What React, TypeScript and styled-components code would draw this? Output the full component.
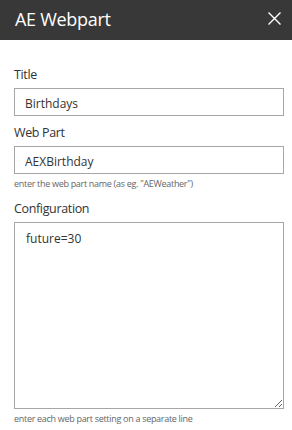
import React from 'react';
import styled, { createGlobalStyle } from 'styled-components';

const GlobalStyle = createGlobalStyle`
  html, body {
    margin: 0;
    padding: 0;
    background: #ffffff;
  }
  body {
    font-family: "Open Sans", "Noto Sans", sans-serif;
    color: #333333;
  }
`;

interface FieldProps {
  label: string;
  help?: string;
  children: React.ReactNode;
}

const Field: React.FC<FieldProps> = ({ label, help, children }) => (
  <FieldBlock>
    <Label>{label}</Label>
    {children}
    {help && <Help>{help}</Help>}
  </FieldBlock>
);

const App: React.FC = () => {
  return (
    <>
      <GlobalStyle />
      <Panel>
        <Header>
          <HeaderTitle>AE Webpart</HeaderTitle>
          <CloseButton aria-label="Close">
            <svg width="13" height="13" viewBox="0 0 13 13">
              <path d="M0.5 0.5 L12.5 12.5 M12.5 0.5 L0.5 12.5" stroke="#ffffff" strokeWidth="1.4" fill="none" />
            </svg>
          </CloseButton>
        </Header>
        <Body>
          <Field label="Title">
            <TextInput defaultValue="Birthdays" />
          </Field>
          <Field label="Web Part" help={'enter the web part name (as eg. "AEWeather")'}>
            <TextInput defaultValue="AEXBirthday" />
          </Field>
          <Field label="Configuration" help="enter each web part setting on a separate line">
            <TextArea defaultValue="future=30" />
          </Field>
        </Body>
      </Panel>
    </>
  );
};

const Panel = styled.div`
  width: 292px;
  height: 430px;
  display: flex;
  flex-direction: column;
  background: #ffffff;
`;

const Header = styled.div`
  height: 40px;
  background: #383838;
  display: flex;
  align-items: center;
  justify-content: space-between;
  padding: 0 11px 3px 15px;
  box-sizing: border-box;
`;

const HeaderTitle = styled.div`
  color: #ffffff;
  font-size: 18px;
  font-weight: 400;
  letter-spacing: -0.3px;
  line-height: 22px;
`;

const CloseButton = styled.button`
  background: none;
  border: none;
  padding: 0;
  width: 13px;
  height: 13px;
  display: flex;
  cursor: pointer;
`;

const Body = styled.div`
  padding: 25px 8px 0 14px;
  display: flex;
  flex-direction: column;
  gap: 7px;
`;

const FieldBlock = styled.div`
  display: flex;
  flex-direction: column;
`;

const Label = styled.label`
  font-size: 12.5px;
  letter-spacing: -0.35px;
  color: #333333;
  line-height: 20px;
  margin-bottom: 3px;
`;

const TextInput = styled.input`
  width: 270px;
  height: 28px;
  box-sizing: border-box;
  border: 1px solid #a6a6a6;
  border-radius: 0;
  padding: 2px 10px 0;
  font-family: "Open Sans", "Noto Sans", sans-serif;
  font-size: 12px;
  color: #333333;
  outline: none;
`;

const TextArea = styled.textarea`
  width: 270px;
  height: 187px;
  box-sizing: border-box;
  border: 1px solid #a6a6a6;
  border-radius: 0;
  padding: 6px 11px;
  font-family: "Open Sans", "Noto Sans", sans-serif;
  font-size: 12px;
  line-height: 20px;
  color: #333333;
  outline: none;
  resize: vertical;
`;

const Help = styled.div`
  font-size: 9px;
  letter-spacing: -0.3px;
  color: #666666;
  margin: 3px 0 1px;
  line-height: 14px;
`;

export default App;
